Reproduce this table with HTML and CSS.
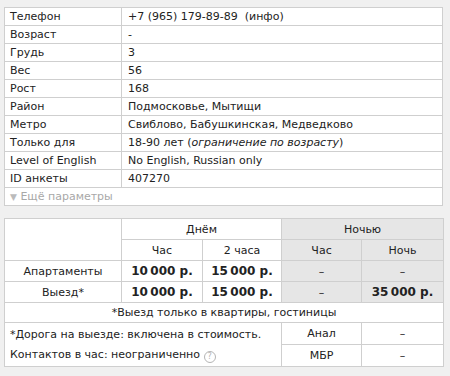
FILE: index.html
```html
<!DOCTYPE html>
<html lang="ru">
<head>
  <meta charset="UTF-8">
  <title>Анкета 407270</title>
  <link rel="stylesheet" href="styles.css">
</head>
<body>
  <table class="params">
    <colgroup><col class="c-name"><col></colgroup>
    <tr><td class="name">Телефон</td><td>+7 (965) 179-89-89&nbsp; (инфо)</td></tr>
    <tr><td class="name">Возраст</td><td>-</td></tr>
    <tr><td class="name">Грудь</td><td>3</td></tr>
    <tr><td class="name">Вес</td><td>56</td></tr>
    <tr><td class="name">Рост</td><td>168</td></tr>
    <tr><td class="name">Район</td><td>Подмосковье, Мытищи</td></tr>
    <tr><td class="name">Метро</td><td>Свиблово, Бабушкинская, Медведково</td></tr>
    <tr><td class="name">Только для</td><td>18-90 лет (<i>ограничение по возрасту</i>)</td></tr>
    <tr><td class="name">Level of English</td><td>No English, Russian only</td></tr>
    <tr><td class="name">ID анкеты</td><td>407270</td></tr>
    <tr><td class="more" colspan="2"><span class="arrow">&#9660;</span> Ещё параметры</td></tr>
  </table>

  <table class="prices">
    <colgroup>
      <col class="c-type">
      <col class="c-day1">
      <col class="c-day2">
      <col class="c-night1">
      <col class="c-night2">
    </colgroup>
    <tr class="head">
      <td rowspan="2"></td>
      <td colspan="2">Днём</td>
      <td colspan="2" class="night">Ночью</td>
    </tr>
    <tr class="head">
      <td>Час</td>
      <td>2 часа</td>
      <td class="night">Час</td>
      <td class="night">Ночь</td>
    </tr>
    <tr class="row">
      <td>Апартаменты</td>
      <td class="price">10&#8239;000 р.</td>
      <td class="price">15&#8239;000 р.</td>
      <td class="night">–</td>
      <td class="night">–</td>
    </tr>
    <tr class="row">
      <td>Выезд*</td>
      <td class="price">10&#8239;000 р.</td>
      <td class="price">15&#8239;000 р.</td>
      <td class="night">–</td>
      <td class="night price">35&#8239;000 р.</td>
    </tr>
    <tr>
      <td colspan="5" class="note">*Выезд только в квартиры, гостиницы</td>
    </tr>
    <tr class="extra">
      <td colspan="3" rowspan="2" class="info">
        *Дорога на выезде: включена в стоимость.<br>
        Контактов в час: неограниченно <span class="help">?</span>
      </td>
      <td>Анал</td>
      <td>–</td>
    </tr>
    <tr class="extra">
      <td>МБР</td>
      <td>–</td>
    </tr>
  </table>
</body>
</html>
```

FILE: styles.css
```css
body {
  margin: 0;
  padding: 7px 4px 0;
  background: #f0f0f0;
  font-family: 'DejaVu Sans', Verdana, sans-serif;
  font-size: 11px;
  color: #222;
}
table {
  border-collapse: collapse;
  table-layout: fixed;
  background: #fff;
  width: 439px;
}
td {
  border: 1px solid #cfcfcf;
  white-space: nowrap;
}
.params td {
  height: 18px;
  padding: 0 6px;
  box-sizing: border-box;
}
.params .c-name {
  width: 117px;
}
.params td.name {
  padding-left: 5px;
}
.params .more {
  color: #a8a8a8;
  padding-left: 5px;
}
.params .arrow {
  font-size: 9px;
  color: #bbb;
}
.prices {
  margin-top: 12px;
  text-align: center;
}
.prices .c-type { width: 117px; }
.prices .c-day1 { width: 81px; }
.prices .c-day2 { width: 79px; }
.prices .c-night1 { width: 80px; }
.prices .c-night2 { width: 82px; }
.prices td {
  height: 21px;
  padding: 0 2px;
  box-sizing: border-box;
}
.prices .night {
  background: #e6e6e6;
}
.prices .price {
  font-weight: bold;
  font-size: 12px;
}
.prices .note {
  height: 20px;
}
.prices .extra td {
  height: 22px;
}
.prices .info {
  text-align: left;
  padding: 1px 5px;
  line-height: 20px;
}
.help {
  display: inline-block;
  width: 10px;
  height: 10px;
  border: 1px solid #b5b5b5;
  border-radius: 50%;
  color: #b5b5b5;
  font-size: 8px;
  line-height: 10px;
  text-align: center;
  vertical-align: -1px;
}
```
